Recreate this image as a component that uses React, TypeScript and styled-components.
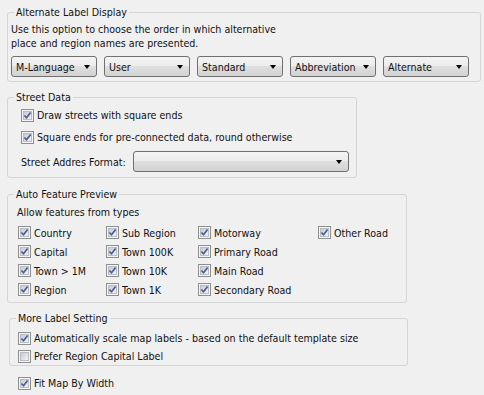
import React from "react";
import styled, { createGlobalStyle } from "styled-components";

const GlobalStyle = createGlobalStyle`
  body {
    margin: 0;
    background: #f0f0f0;
    font-family: "DejaVu Sans Condensed", "DejaVu Sans", sans-serif;
    font-size: 10.6px;
    color: #111;
  }
`;

const Page = styled.div`
  display: flex;
  flex-direction: column;
  align-items: flex-start;
  padding: 5px 0 0 7px;
  width: 484px;
  height: 395px;
  box-sizing: border-box;
`;

interface GroupProps {
  $width: number;
  $top?: number;
  $left?: number;
}

const Group = styled.fieldset<GroupProps>`
  margin: ${props => props.$top || 0}px 0 0 ${props => props.$left || 0}px;
  padding: 0;
  min-width: 0;
  width: ${props => props.$width}px;
  box-sizing: border-box;
  border: 1px solid #d5d5d5;
  border-radius: 3px;
`;

const Legend = styled.legend`
  margin-left: 6px;
  padding: 0 2px;
  height: 14px;
  line-height: 14px;
`;

interface BodyProps {
  $pad: string;
}

const GroupBody = styled.div<BodyProps>`
  display: flex;
  flex-direction: column;
  padding: ${props => props.$pad};
`;

const Description = styled.p`
  margin: 0;
  line-height: 14px;
`;

const ComboRow = styled.div`
  display: flex;
  gap: 7px;
  margin-top: 6px;
`;

const ComboBox = styled.div<{ $width: number }>`
  display: flex;
  align-items: center;
  width: ${props => props.$width}px;
  height: 21px;
  box-sizing: border-box;
  padding: 0 6px 0 4px;
  border: 1px solid #707070;
  border-radius: 3px;
  background: linear-gradient(#f3f3f3 0%, #ececec 50%, #dfdfdf 50%, #d2d2d2 100%);
`;

const ComboText = styled.span`
  flex: 1;
  white-space: nowrap;
  overflow: hidden;
`;

const Arrow = styled.span`
  width: 0;
  height: 0;
  border-left: 3.5px solid transparent;
  border-right: 3.5px solid transparent;
  border-top: 4px solid #000;
`;

const CheckRow = styled.label<{ $height?: number; $top?: number; $left?: number }>`
  display: flex;
  align-items: center;
  gap: 3px;
  height: ${props => props.$height || 18}px;
  margin: ${props => props.$top || 0}px 0 0 ${props => props.$left || 0}px;
  white-space: nowrap;
`;

const FormatRow = styled.div`
  display: flex;
  align-items: center;
  margin-top: 5px;
`;

const FieldLabel = styled.span`
  width: 112px;
`;

const Subtitle = styled.div`
  margin-top: 4px;
  line-height: 14px;
`;

const FeatureGrid = styled.div`
  display: grid;
  grid-template-columns: 88px 92px 120px auto;
  grid-template-rows: repeat(4, 19px);
  grid-auto-flow: column;
  margin: 4px 0 0 1px;
`;

const Check = ({ checked = true }: { checked?: boolean }) => (
  <svg width="13" height="13" viewBox="0 0 13 13">
    <defs>
      <linearGradient id="cbfill" x1="0" y1="0" x2="1" y2="1">
        <stop offset="0" stopColor="#c3c7ce" />
        <stop offset="1" stopColor="#f6f6f6" />
      </linearGradient>
    </defs>
    <rect x="0.5" y="0.5" width="12" height="12" fill="#f4f4f4" stroke="#8e8f8f" />
    <rect x="2.5" y="2.5" width="8" height="8" fill="url(#cbfill)" stroke="#b9bdc4" />
    {checked ? (
      <path
        d="M3.4 6.5 L5.5 8.8 L9.6 3.4"
        fill="none"
        stroke="#4a5d98"
        strokeWidth="1.7"
        strokeLinejoin="round"
      />
    ) : null}
  </svg>
);

interface CheckItemProps {
  label: string;
  checked?: boolean;
  height?: number;
  top?: number;
  left?: number;
}

const CheckItem = ({ label, checked = true, height, top, left }: CheckItemProps) => (
  <CheckRow $height={height} $top={top} $left={left}>
    <Check checked={checked} />
    <span>{label}</span>
  </CheckRow>
);

const Combo = ({ text, width }: { text: string; width: number }) => (
  <ComboBox $width={width}>
    <ComboText>{text}</ComboText>
    <Arrow />
  </ComboBox>
);

const labelOrders = ["M-Language", "User", "Standard", "Abbreviation", "Alternate"];

const features = [
  "Country", "Capital", "Town > 1M", "Region",
  "Sub Region", "Town 100K", "Town 10K", "Town 1K",
  "Motorway", "Primary Road", "Main Road", "Secondary Road",
  "Other Road",
];

const App = () => (
  <>
    <GlobalStyle />
    <Page>
      <Group $width={474}>
        <Legend>Alternate Label Display</Legend>
        <GroupBody $pad="3px 0 4px 3px">
          <Description>
            Use this option to choose the order in which alternative
            <br />
            place and region names are presented.
          </Description>
          <ComboRow>
            {labelOrders.map(o => (
              <Combo key={o} text={o} width={86} />
            ))}
          </ComboRow>
        </GroupBody>
      </Group>

      <Group $width={350} $top={8}>
        <Legend>Street Data</Legend>
        <GroupBody $pad="2px 0 5px 13px">
          <CheckItem label="Draw streets with square ends" />
          <CheckItem label="Square ends for pre-connected data, round otherwise" top={4} />
          <FormatRow>
            <FieldLabel>Street Addres Format:</FieldLabel>
            <Combo text="" width={216} />
          </FormatRow>
        </GroupBody>
      </Group>

      <Group $width={400} $top={9}>
        <Legend>Auto Feature Preview</Legend>
        <GroupBody $pad="0 0 3px 9px">
          <Subtitle>Allow features from types</Subtitle>
          <FeatureGrid>
            {features.map(f => (
              <CheckItem key={f} label={f} height={19} />
            ))}
          </FeatureGrid>
        </GroupBody>
      </Group>

      <Group $width={399} $top={8} $left={2}>
        <Legend>More Label Setting</Legend>
        <GroupBody $pad="4px 0 0 8px">
          <CheckItem label="Automatically scale map labels - based on the default template size" />
          <CheckItem label="Prefer Region Capital Label" checked={false} />
        </GroupBody>
      </Group>

      <CheckItem label="Fit Map By Width" top={8} left={11} />
    </Page>
  </>
);

export default App;
